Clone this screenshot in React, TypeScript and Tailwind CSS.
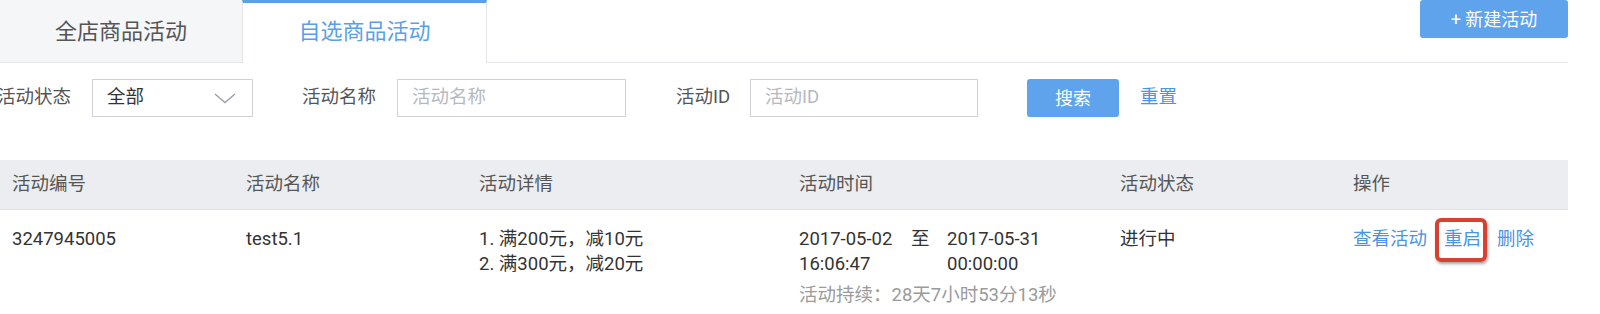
import React from "react";

const font = { fontFamily: '"Roboto", "Noto Sans CJK SC", sans-serif' };

const cols = ["w-[234px]", "w-[233px]", "w-[320px]", "w-[321px]", "w-[233px]", "flex-1"];
const headers = ["活动编号", "活动名称", "活动详情", "活动时间", "活动状态", "操作"];

function Chevron() {
	return (
		<svg width="22" height="11" viewBox="0 0 22 11" fill="none">
			<path d="M1 1 L11 9.5 L21 1" stroke="#9aa0a8" strokeWidth="1.4" />
		</svg>
	);
}

export default function App() {
	return (
		<div className="w-[1600px] h-[314px] bg-white overflow-hidden text-[#333] text-[18.5px]" style={font}>
			<div className="w-[1568px]">
				{/* Tabs */}
				<div className="flex items-stretch h-[63px]">
					<div className="w-[242px] bg-[#f5f6f8] border-b border-[#e3e5e9] flex items-center justify-center text-[22px] text-[#555]">
						全店商品活动
					</div>
					<div className="w-[245px] bg-white border-t-[3px] border-t-[#5b9fe8] border-r border-r-[#e3e5e9] border-l border-l-[#e3e5e9] flex items-center justify-center text-[22px] text-[#5b9fe8] pb-[3px]">
						自选商品活动
					</div>
					<div className="flex-1 border-b border-[#e3e5e9] flex justify-end items-start">
						<button className="w-[148px] h-[38px] bg-[#5ea3ec] rounded-[3px] text-white text-[18px]">
							+ 新建活动
						</button>
					</div>
				</div>

				{/* Filters */}
				<div className="flex items-center h-[38px] mt-[16px]">
					<span className="ml-[-3px] w-[95px] text-[#555]">活动状态</span>
					<div className="w-[161px] h-[38px] border border-[#cfd3d9] flex items-center justify-between pl-[14px] pr-[16px] text-[#333]">
						<span>全部</span>
						<Chevron />
					</div>
					<span className="ml-[49px] w-[95px] text-[#555]">活动名称</span>
					<div className="w-[229px] h-[38px] border border-[#cfd3d9] flex items-center pl-[14px] text-[#b5b9bf]">
						活动名称
					</div>
					<span className="ml-[50px] w-[74px] text-[#555]">活动ID</span>
					<div className="w-[228px] h-[38px] border border-[#cfd3d9] flex items-center pl-[14px] text-[#b5b9bf]">
						活动ID
					</div>
					<button className="ml-[49px] w-[92px] h-[38px] bg-[#5ea3ec] rounded-[3px] text-white text-[18px]">
						搜索
					</button>
					<span className="ml-[21px] text-[#4a94e4]">重置</span>
				</div>

				{/* Table header */}
				<div className="flex h-[50px] items-center bg-[#ebedf0] border-b border-[#e0e2e6] mt-[43px] pl-[12px] text-[#555]">
					{headers.map((h, i) => (
						<div key={h} className={cols[i]}>
							{h}
						</div>
					))}
				</div>

				{/* Row */}
				<div className="flex pl-[12px] pt-[17px] leading-[25px] text-[#333]">
					<div className={cols[0]}>3247945005</div>
					<div className={cols[1]}>test5.1</div>
					<div className={cols[2]}>
						<p>1. 满200元，减10元</p>
						<p>2. 满300元，减20元</p>
					</div>
					<div className={cols[3]}>
						<div className="flex">
							<div className="w-[112px]">
								<p>2017-05-02</p>
								<p>16:06:47</p>
							</div>
							<div className="w-[36px]">至</div>
							<div>
								<p>2017-05-31</p>
								<p>00:00:00</p>
							</div>
						</div>
						<p className="mt-[6px] text-[#9a9a9a]">活动持续：28天7小时53分13秒</p>
					</div>
					<div className={cols[4]}>进行中</div>
					<div className={`${cols[5]} flex items-start text-[#4a94e4]`}>
						<span>查看活动</span>
						<span className="relative ml-[17px]">
							重启
							<span className="absolute left-[-9px] top-[-9px] w-[52px] h-[44px] border-[4px] border-[#d8402f] rounded-[6px] shadow-[1px_2px_3px_rgba(0,0,0,0.35)]"></span>
						</span>
						<span className="ml-[16px]">删除</span>
					</div>
				</div>
			</div>
		</div>
	);
}
